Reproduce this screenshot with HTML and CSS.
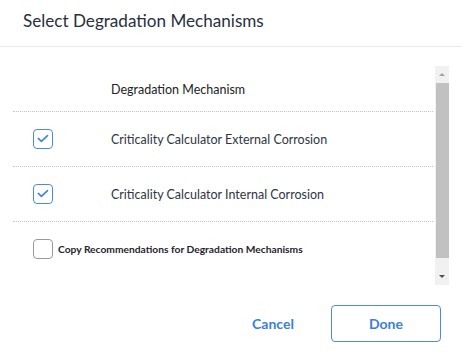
FILE: index.html
```html
<!DOCTYPE html>
<html lang="en">
<head>
    <meta charset="UTF-8">
    <title>Select Degradation Mechanisms</title>
    <link rel="stylesheet" href="styles.css">
</head>
<body>
    <div class="dialog">
        <div class="dialog-header">
            <h2 class="dialog-title">Select Degradation Mechanisms</h2>
        </div>

        <div class="dialog-body">
            <div class="scroll-area">
                <div class="scroll-content">
                    <div class="table-row table-head">
                        <span class="cell-check"></span>
                        <span class="cell-name">Degradation Mechanism</span>
                    </div>
                    <div class="table-row">
                        <span class="cell-check"><span class="checkbox checked">
                            <svg viewBox="0 0 20 20"><path d="M4.8 9.4l3.4 3.2 6.8-6.4" fill="none" stroke="currentColor" stroke-width="1.8" stroke-linecap="round" stroke-linejoin="round"/></svg>
                        </span></span>
                        <span class="cell-name">Criticality Calculator External Corrosion</span>
                    </div>
                    <div class="table-row">
                        <span class="cell-check"><span class="checkbox checked">
                            <svg viewBox="0 0 20 20"><path d="M4.8 9.4l3.4 3.2 6.8-6.4" fill="none" stroke="currentColor" stroke-width="1.8" stroke-linecap="round" stroke-linejoin="round"/></svg>
                        </span></span>
                        <span class="cell-name">Criticality Calculator Internal Corrosion</span>
                    </div>
                    <div class="copy-row">
                        <span class="checkbox"></span>
                        <span class="copy-label">Copy Recommendations for Degradation Mechanisms</span>
                    </div>
                </div>

                <!-- barra de rolagem desenhada -->
                <div class="scrollbar">
                    <span class="arrow up"></span>
                    <span class="thumb"></span>
                    <span class="arrow down"></span>
                </div>
            </div>
        </div>

        <div class="dialog-footer">
            <button class="btn btn-link">Cancel</button>
            <button class="btn btn-outline">Done</button>
        </div>
    </div>
</body>
</html>
```

FILE: styles.css
```css
/* --- Geral --- */
* {
    margin: 0;
    padding: 0;
    box-sizing: border-box;
}

body {
    font-family: 'Lato', 'Liberation Sans', sans-serif;
    background: #fff;
    color: #2b2f38;
    width: 462px;
    height: 359px;
    overflow: hidden;
}

.dialog {
    display: flex;
    flex-direction: column;
    height: 100%;
}

/* --- Cabeçalho --- */
.dialog-header {
    height: 47px;
    padding: 10px 23px 0;
    border-bottom: 1px solid #ebebeb;
}
.dialog-title {
    font-size: 17.1px;
    font-weight: 400;
    color: #27303d;
}

/* --- Corpo --- */
.dialog-body {
    padding: 19px 13px 0 13px;
}
.scroll-area {
    display: flex;
    height: 219px;
}
.scroll-content {
    flex: 1;
    margin-right: 2px;
}

.table-row {
    display: flex;
    align-items: center;
    height: 55px;
    border-bottom: 1px dotted #c4c4c4;
    font-size: 12.5px;
    color: #2f3542;
}
.table-head {
    height: 46px;
    color: #222;
}
.cell-check {
    width: 98px;
    padding-left: 20px;
    display: flex;
    align-items: center;
}
.cell-name {
    padding-top: 1px;
}

.checkbox {
    width: 20px;
    height: 20px;
    border: 1px solid #9a9a9a;
    border-radius: 4px;
    background: #fff;
    display: inline-flex;
    align-items: center;
    justify-content: center;
    flex-shrink: 0;
}
.checkbox.checked {
    border-color: #4a8ae6;
    color: #3f82e0;
}
.checkbox svg {
    width: 20px;
    height: 20px;
}

.copy-row {
    display: flex;
    align-items: center;
    gap: 5px;
    padding: 17px 0 0 20px;
}
.copy-label {
    font-size: 10.25px;
    font-weight: 700;
    color: #1f232b;
}

/* --- Barra de rolagem --- */
.scrollbar {
    width: 14px;
    background: #f1f1f1;
    display: flex;
    flex-direction: column;
    align-items: center;
}
.arrow {
    height: 17px;
    width: 14px;
    position: relative;
}
.arrow::after {
    content: "";
    position: absolute;
    left: 4px;
    border-left: 3px solid transparent;
    border-right: 3px solid transparent;
}
.arrow.up::after {
    top: 7px;
    border-bottom: 3px solid #a3a3a3;
}
.arrow.down::after {
    top: 7px;
    border-top: 3px solid #505050;
}
.thumb {
    flex: 1;
    width: 13px;
    background: #c1c1c1;
    margin-bottom: 10px;
}

/* --- Rodapé --- */
.dialog-footer {
    display: flex;
    justify-content: flex-end;
    gap: 18px;
    padding: 20px 21px 0 0;
}
.btn {
    font-family: 'Lato', 'Liberation Sans', sans-serif;
    font-size: 14px;
    font-weight: 700;
    color: #3a7ee0;
    background: #fff;
    height: 37px;
    border-radius: 4px;
    cursor: pointer;
}
.btn-link {
    width: 80px;
    border: none;
}
.btn-outline {
    width: 110px;
    border: 1px solid #4a8ae6;
}
```
